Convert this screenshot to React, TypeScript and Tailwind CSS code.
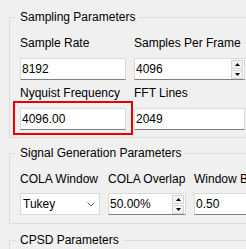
import React from "react";

// Qt-style line edit: light frame with a darker bottom edge
function LineEdit({ value, spin = false }: { value: string; spin?: boolean }) {
  return (
    <div className="flex h-[22px] items-center border border-[#dadada] border-b-[#7f7f7f] bg-white">
      <span className="flex-1 pl-[1px] whitespace-nowrap">{value}</span>
      {spin && (
        <div className="mr-[1px] flex flex-col gap-[1px]">
          <div className="flex h-[9px] w-[12px] items-center justify-center border border-[#d4d4d4] bg-[#f3f3f3]">
            <svg width="5" height="3" viewBox="0 0 5 3" aria-hidden="true">
              <path d="M2.5 0 L5 3 L0 3 Z" fill="#000" />
            </svg>
          </div>
          <div className="flex h-[9px] w-[12px] items-center justify-center border border-[#d4d4d4] bg-[#f3f3f3]">
            <svg width="5" height="3" viewBox="0 0 5 3" aria-hidden="true">
              <path d="M0 0 L5 0 L2.5 3 Z" fill="#000" />
            </svg>
          </div>
        </div>
      )}
    </div>
  );
}

function ComboBox({ value }: { value: string }) {
  return (
    <div className="flex h-[22px] items-center border border-[#d9d9d9] bg-white">
      <span className="flex-1 pl-[2px]">{value}</span>
      <svg className="mr-[4px]" width="8" height="5" viewBox="0 0 8 5" aria-hidden="true">
        <path d="M0.5 0.5 L4 4 L7.5 0.5" fill="none" stroke="#606060" strokeWidth="1" />
      </svg>
    </div>
  );
}

function Field({ label, children }: { label: string; children: React.ReactNode }) {
  return (
    <div className="flex flex-col">
      <span className="h-[16px] whitespace-nowrap">{label}</span>
      <div className="mt-[7px]">{children}</div>
    </div>
  );
}

export default function App() {
  return (
    <div className="h-[249px] w-[246px] overflow-hidden bg-[#f0f0f0] font-['Liberation_Sans',Arial,sans-serif] text-[12px] leading-[16px] text-black">
      <div className="w-[280px] pl-[9px] pt-[9px]">
        {/* Sampling Parameters */}
        <fieldset className="border border-[#dcdcdc] px-[10px] pt-[10px] pb-[7px]">
          <legend className="-ml-[4px] px-[4px]">Sampling Parameters</legend>
          <div className="grid grid-cols-[106px_111px] gap-x-[8px] gap-y-[5px]">
            <Field label="Sample Rate">
              <LineEdit value="8192" />
            </Field>
            <Field label="Samples Per Frame">
              <LineEdit value="4096" spin />
            </Field>
            <Field label="Nyquist Frequency">
              <div className="relative">
                <LineEdit value="4096.00" />
                <div className="pointer-events-none absolute -left-[7px] -top-[7px] h-[34px] w-[120px] border-2 border-[#e60000]" />
              </div>
            </Field>
            <Field label="FFT Lines">
              <LineEdit value="2049" />
            </Field>
          </div>
        </fieldset>

        {/* Signal Generation Parameters */}
        <fieldset className="mt-[7px] border border-[#dcdcdc] px-[10px] pt-[10px] pb-[8px]">
          <legend className="-ml-[4px] px-[4px]">Signal Generation Parameters</legend>
          <div className="grid grid-cols-[80px_78px_80px] gap-x-[8px]">
            <div className="flex flex-col">
              <span className="h-[16px] whitespace-nowrap">COLA Window</span>
              <div className="mt-[6px]">
                <ComboBox value="Tukey" />
              </div>
            </div>
            <div className="flex flex-col">
              <span className="h-[16px] whitespace-nowrap">COLA Overlap</span>
              <div className="mt-[6px]">
                <LineEdit value="50.00%" spin />
              </div>
            </div>
            <div className="flex flex-col">
              <span className="h-[16px] whitespace-nowrap">Window Beta</span>
              <div className="mt-[6px]">
                <LineEdit value="0.50" />
              </div>
            </div>
          </div>
        </fieldset>

        {/* CPSD Parameters */}
        <fieldset className="mt-[8px] h-[60px] border border-[#dcdcdc] px-[10px]">
          <legend className="-ml-[4px] px-[4px]">CPSD Parameters</legend>
        </fieldset>
      </div>
    </div>
  );
}
